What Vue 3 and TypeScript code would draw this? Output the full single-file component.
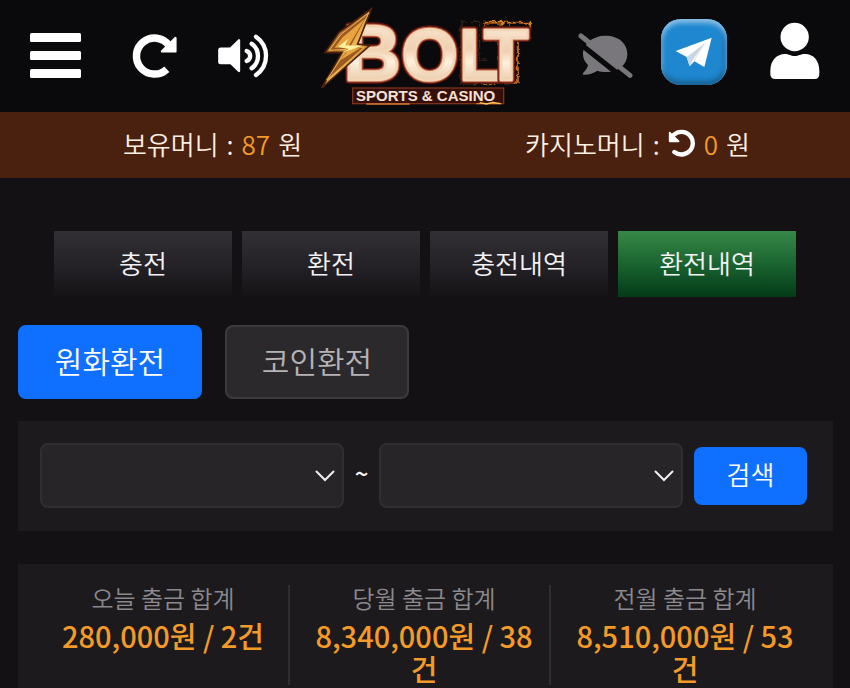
<script setup lang="ts">
import { ref } from 'vue'

interface Tab {
  id: string
  label: string
}

interface Total {
  label: string
  amount: string
  count: number
}

const tabs: Tab[] = [
  { id: 'deposit', label: '충전' },
  { id: 'withdraw', label: '환전' },
  { id: 'deposit-history', label: '충전내역' },
  { id: 'withdraw-history', label: '환전내역' },
]

const kinds: Tab[] = [
  { id: 'krw', label: '원화환전' },
  { id: 'coin', label: '코인환전' },
]

const totals: Total[] = [
  { label: '오늘 출금 합계', amount: '280,000', count: 2 },
  { label: '당월 출금 합계', amount: '8,340,000', count: 38 },
  { label: '전월 출금 합계', amount: '8,510,000', count: 53 },
]

const activeTab = ref('withdraw-history')
const activeKind = ref('krw')
const from = ref('')
const to = ref('')
</script>

<template>
  <div class="page">
    <header class="topbar">
      <button class="icon-btn" type="button" aria-label="메뉴">
        <svg width="52" height="46" viewBox="0 0 52 46" fill="#fff">
          <rect x="0" y="0" width="51" height="9" rx="1.5" />
          <rect x="0" y="18" width="51" height="9" rx="1.5" />
          <rect x="0" y="36" width="51" height="9" rx="1.5" />
        </svg>
      </button>
      <button class="icon-btn" type="button" aria-label="새로고침">
        <svg width="50" height="52" viewBox="130 30 50 52">
          <path d="M166.8 69.2A18 18 0 1 1 169 45.5" fill="none" stroke="#fff" stroke-width="7.5" />
          <path d="M175.4 38V51.4H162Z" fill="#fff" stroke="#fff" stroke-width="2.4" stroke-linejoin="round" />
        </svg>
      </button>
      <button class="icon-btn" type="button" aria-label="소리">
        <svg width="52" height="46" viewBox="654 99 156 138">
          <path d="M662 146H692L717 121V213L692 189H662Q658 189 658 185V150Q658 146 662 146Z" fill="#fff" stroke="#fff" stroke-width="7" stroke-linejoin="round" />
          <g fill="none" stroke="#fff" stroke-width="13" stroke-linecap="round">
            <path d="M740 153A16 16 0 0 1 740 183" />
            <path d="M755 131A45.5 45.5 0 0 1 755 205" />
            <path d="M768 110A70 70 0 0 1 768 225" />
          </g>
        </svg>
      </button>
      <a class="logo" href="#" aria-label="BOLT SPORTS &amp; CASINO">
        <svg width="230" height="112" viewBox="4 0 690 336">
          <defs>
            <linearGradient id="cream" x1="0" y1="0" x2="0" y2="1">
              <stop offset="0" stop-color="#fff1df" />
              <stop offset="0.45" stop-color="#efd0b2" />
              <stop offset="0.6" stop-color="#fff0dc" />
              <stop offset="1" stop-color="#d9ae88" />
            </linearGradient>
            <linearGradient id="gold" x1="0" y1="0" x2="1" y2="1">
              <stop offset="0" stop-color="#ffe0a0" />
              <stop offset="0.4" stop-color="#a76322" />
              <stop offset="0.55" stop-color="#f0b64d" />
              <stop offset="1" stop-color="#7a3a12" />
            </linearGradient>
            <filter id="flame" x="-20%" y="-20%" width="140%" height="140%">
              <feTurbulence type="fractalNoise" baseFrequency="0.07" numOctaves="2" seed="4" />
              <feDisplacementMap in="SourceGraphic" scale="20" xChannelSelector="R" yChannelSelector="G" />
            </filter>
            <text id="word" class="word" y="240"><tspan class="big" x="102">B</tspan><tspan x="276">O</tspan><tspan x="449">L</tspan></text>
            <text id="tee" class="word" y="240" x="524">T</text>
          </defs>
          <g filter="url(#flame)" fill="none">
            <path d="M457 100V64H510V180H530M452 90V252H600" stroke="#5a3d28" stroke-width="2" />
            <path d="M524 68H658V114H624V246H568V120H524Z" stroke="#a8500f" stroke-width="6" />
            <path d="M522 68H660V115H625V250H500" stroke="#f0a838" stroke-width="2" />
          </g>
          <use href="#word" class="outer" />
          <use href="#word" class="rim" />
          <use href="#word" class="face" />
          <use href="#tee" class="outer" />
          <use href="#tee" class="rim" />
          <use href="#tee" class="face" />
          <path d="M185 27L88 97L46 158L97 157L36 264L180 137L144 132Z" fill="url(#gold)" stroke="#4d210c" stroke-width="5" />
          <path d="M178 38L94 103L59 151L112 148L51 240L162 143L124 139Z" fill="#9b5b20" stroke="#e7ae55" stroke-width="3" />
          <path d="M165 57L99 112L75 143L122 140L92 181L151 145L114 143Z" fill="#e9a440" />
          <path d="M85 141L116 116L106 136L158 137L99 158L117 147Z" fill="#fff0a2" />
          <rect x="129" y="264" width="453" height="47" fill="#35100b" stroke="#7b3218" stroke-width="4" />
          <path d="M170 312H300M500 311H575" stroke="#d77a32" stroke-width="4" />
          <path d="M510 308L530 312L550 307L572 311" fill="none" stroke="#ffc64f" stroke-width="4" />
          <text class="tagline" x="139" y="303">SPORTS &amp; CASINO</text>
        </svg>
      </a>
      <button class="icon-btn" type="button" aria-label="채팅 끄기">
        <svg width="56" height="48" viewBox="56 97 168 144">
          <path d="M142 108C181 108 207 132 207 163C207 194 182 217 145 217C134 217 125 216 117 213C107 220 91 226 76 225C73 225 72 222 75 219C83 211 88 203 89 196C79 187 74 176 74 163C74 132 104 108 142 108Z" fill="#79777b" />
          <path d="M52 122L206 244" stroke="#0a090b" stroke-width="16" />
          <path d="M68 109L215 227" stroke="#79777b" stroke-width="15" stroke-linecap="round" />
        </svg>
      </button>
      <a class="telegram" href="#" aria-label="텔레그램">
        <svg width="38" height="32" viewBox="346 108 114 96">
          <path d="M348 153L456 113L434 201L404 184L390 199L381 171Z" fill="#fff" />
          <path d="M381 171L438 128L400 178L390 199Z" fill="#c9d6e2" />
          <path d="M400 178L440 127L404 184Z" fill="#e9eff5" />
        </svg>
      </a>
      <button class="icon-btn user" type="button" aria-label="내 정보">
        <svg width="50" height="58" viewBox="630 66 150 174" fill="#fff">
          <circle cx="704" cy="111" r="42.5" />
          <path d="M631 213C631 181 650 162 675 162C688 162 691 168 704 168C717 168 721 162 735 162C760 162 778 181 778 213V222Q778 237 763 237H646Q631 237 631 222Z" />
        </svg>
      </button>
    </header>

    <section class="money">
      <p>
        <span>보유머니</span><span>:</span><b>87</b><span>원</span>
      </p>
      <p>
        <span>카지노머니</span><span>:</span>
        <button class="reload" type="button" aria-label="카지노머니 새로고침">
          <svg width="28" height="28" viewBox="468 56 84 84">
            <path d="M487 125A34 34 0 1 0 486 73" fill="none" stroke="#fff" stroke-width="13" stroke-linecap="round" />
            <path d="M473 67V93H500Z" fill="#fff" stroke="#fff" stroke-width="5" stroke-linejoin="round" />
          </svg>
        </button>
        <b>0</b><span>원</span>
      </p>
    </section>

    <main>
      <nav class="tabs">
        <button
          v-for="tab in tabs"
          :key="tab.id"
          type="button"
          :class="['tab', { active: tab.id === activeTab }]"
          @click="activeTab = tab.id"
        >{{ tab.label }}</button>
      </nav>

      <div class="kinds">
        <button
          v-for="kind in kinds"
          :key="kind.id"
          type="button"
          :class="['kind', { active: kind.id === activeKind }]"
          @click="activeKind = kind.id"
        >{{ kind.label }}</button>
      </div>

      <form class="filter" @submit.prevent>
        <label class="picker">
          <select v-model="from" aria-label="시작일"><option value=""></option></select>
          <svg width="20" height="12" viewBox="0 0 20 12"><path d="M1.5 1.5L10 10L18.5 1.5" /></svg>
        </label>
        <span class="tilde">~</span>
        <label class="picker">
          <select v-model="to" aria-label="종료일"><option value=""></option></select>
          <svg width="20" height="12" viewBox="0 0 20 12"><path d="M1.5 1.5L10 10L18.5 1.5" /></svg>
        </label>
        <button class="search" type="submit">검색</button>
      </form>

      <dl class="totals">
        <div v-for="total in totals" :key="total.label" class="total">
          <dt>{{ total.label }}</dt>
          <dd>{{ total.amount }}원 / {{ total.count }}건</dd>
        </div>
      </dl>
    </main>
  </div>
</template>

<style>
body {
  background: #131114;
}
</style>

<style scoped>
.page {
  min-height: 100vh;
  background: #131114;
  color: #f4f2f4;
  font-family: "Noto Sans CJK KR", sans-serif;
  font-weight: 350;
  font-size: 26px;
}

button,
select {
  margin: 0;
  padding: 0;
  border: 0;
  background: none;
  color: inherit;
  font: inherit;
  cursor: pointer;
}

svg {
  display: block;
}

.topbar {
  display: grid;
  grid-template-columns: 111fr 88fr 89fr 276fr 81fr 98fr 103fr;
  align-items: center;
  justify-items: center;
  height: 112px;
  padding-right: 4px;
  background: #0a090b;
}

.icon-btn {
  display: flex;
}

.user {
  margin-bottom: 10px;
}

.word {
  font-family: "Liberation Sans", sans-serif;
  font-weight: 700;
  font-size: 216px;
}

.big {
  font-size: 236px;
}

.outer {
  fill: #64160f;
  stroke: #64160f;
  stroke-width: 22px;
  stroke-linejoin: round;
}

.rim {
  fill: #bf6547;
  stroke: #bf6547;
  stroke-width: 14px;
  stroke-linejoin: round;
}

.face {
  fill: url(#cream);
  stroke: #f3d5b8;
  stroke-width: 8px;
  stroke-linejoin: round;
}

.tagline {
  fill: #f6e1d2;
  font-family: "Liberation Sans", sans-serif;
  font-weight: 700;
  font-size: 45px;
}

.telegram {
  display: flex;
  align-items: center;
  justify-content: center;
  width: 66px;
  height: 66px;
  margin-bottom: 8px;
  border-radius: 20px;
  background: #1e87d0;
  box-shadow: inset 0 4px 5px #8cc0e6, inset 0 -4px 5px #17608f, inset 3px 0 4px #3c9ad8, inset -3px 0 4px #1a70ad;
}

.money {
  display: grid;
  grid-template-columns: 1fr 1fr;
  align-items: center;
  justify-items: center;
  height: 66px;
  background: #4a200e;
  color: #fdf0e2;
}

.money p {
  display: flex;
  align-items: center;
  gap: 8px;
  margin: 0;
  padding-bottom: 4px;
}

.money b {
  color: #f39a28;
  font-weight: 350;
}

main {
  padding: 53px 17px 0 18px;
}

.tabs {
  display: grid;
  grid-template-columns: repeat(4, 1fr);
  gap: 10px;
  padding: 0 37px 0 36px;
}

.tab {
  height: 66px;
  padding-bottom: 4px;
  background: linear-gradient(#323034, #232125 55%, #141215);
}

.tab.active {
  background: linear-gradient(#378847, #1a6430 50%, #033b17);
}

.kinds {
  display: flex;
  gap: 23px;
  margin-top: 28px;
}

.kind {
  width: 184px;
  height: 74px;
  padding-bottom: 4px;
  border: 2px solid #3c3a3e;
  border-radius: 8px;
  background: #2b292c;
  color: #b5b3b6;
  font-size: 30px;
}

.kind.active {
  border-color: #0f6fff;
  background: #0f6fff;
  color: #fff;
}

.filter {
  display: flex;
  align-items: center;
  margin-top: 22px;
  padding: 22px 26px 23px 22px;
  background: #1c1a1d;
}

.picker {
  display: grid;
  flex: 1;
  align-items: center;
}

.picker > * {
  grid-area: 1 / 1;
}

.picker select {
  width: 100%;
  height: 65px;
  padding: 0 44px 0 16px;
  border: 2px solid #302e32;
  border-radius: 8px;
  background: #272528;
  appearance: none;
}

.picker svg {
  justify-self: end;
  margin-right: 9px;
  fill: none;
  stroke: #f0eef0;
  stroke-width: 2;
  stroke-linecap: round;
  pointer-events: none;
}

.tilde {
  width: 35px;
  padding-bottom: 6px;
  font-size: 24px;
  font-weight: 500;
  text-align: center;
}

.search {
  width: 113px;
  height: 58px;
  margin-left: 11px;
  padding-bottom: 4px;
  border-radius: 8px;
  background: #0f6fff;
  color: #fff;
}

.totals {
  display: grid;
  grid-template-columns: repeat(3, 1fr);
  margin: 33px 0 0;
  padding: 21px 21px 21px 11px;
  background: #1c1a1d;
  text-align: center;
}

.total {
  padding: 0 7px 0 16px;
  border-right: 2px solid #302e32;
}

.total:last-child {
  border-right-color: transparent;
}

.total dt {
  color: #8b898d;
  font-size: 24px;
  line-height: 26px;
}

.total dd {
  margin: 8px 0 0;
  color: #f39a28;
  font-size: 29px;
  font-weight: 500;
  line-height: 33px;
}
</style>
